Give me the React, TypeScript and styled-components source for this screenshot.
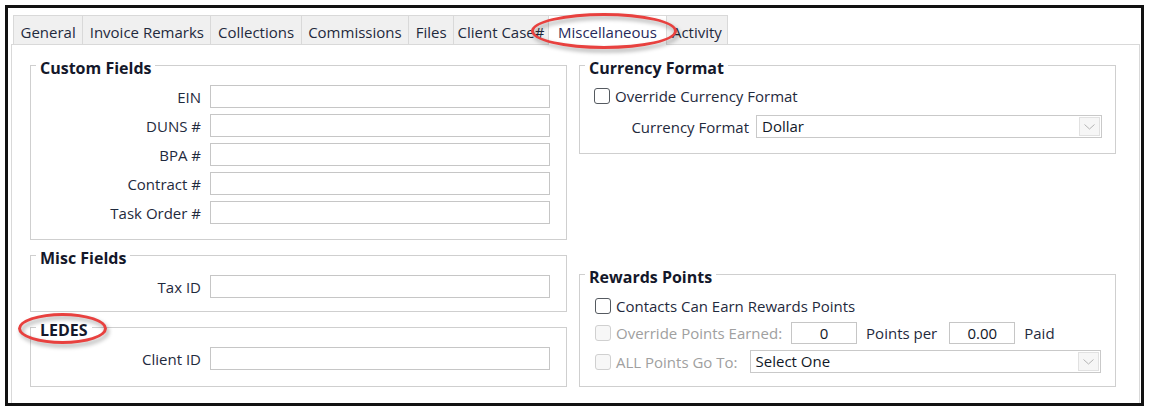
import React from "react";
import styled, { createGlobalStyle, css } from "styled-components";

const GlobalStyle = createGlobalStyle`
  html, body { margin: 0; padding: 0; background: #ffffff; }
  body {
    font-family: "Open Sans", "Noto Sans", sans-serif;
    font-size: 15px;
    color: #1f2a3d;
  }
  *, *::before, *::after { box-sizing: border-box; }
`;

const Frame = styled.div`
  margin: 5px 0 0 5px;
  width: 1139px;
  height: 401px;
  border: 3px solid #111111;
  padding: 7px 1px 0 3px;
  display: flex;
  flex-direction: column;
`;

const TabStrip = styled.div`
  display: flex;
  align-items: flex-end;
  margin-left: 2px;
  position: relative;
  z-index: 1;
`;

const Tab = styled.div<{ $active?: boolean; $pad?: number }>`
  position: relative;
  height: 29px;
  padding: 6px ${(p) => p.$pad ?? 6.5}px 0;
  line-height: 20px;
  border: 1px solid #d9d9d9;
  border-bottom: none;
  background: #f0f0f0;
  white-space: nowrap;
  color: #1f2a3d;
  & + & { margin-left: -1px; }
  ${(p) =>
    p.$active &&
    css`
      z-index: 2;
      height: 30px;
      margin-bottom: -1px;
      background: #ffffff;
      color: #27295a;
    `}
`;

const Callout = styled.span<{ $x: number; $y: number; $w: number; $h: number }>`
  position: absolute;
  left: ${(p) => p.$x}px;
  top: ${(p) => p.$y}px;
  width: ${(p) => p.$w}px;
  height: ${(p) => p.$h}px;
  border: 3px solid #e8413f;
  border-radius: 50%;
  filter: drop-shadow(2px 3px 2px rgba(0, 0, 0, 0.35));
  pointer-events: none;
  z-index: 5;
`;

const Panel = styled.div`
  flex: 1;
  border: 1px solid #d9d9d9;
  border-bottom: none;
  padding: 10px 0 0 18px;
  display: grid;
  grid-template-columns: 537px 537px;
  column-gap: 12px;
  align-content: start;
`;

const Column = styled.div<{ $spread?: boolean }>`
  display: flex;
  flex-direction: column;
  gap: 5px;
  justify-content: ${(p) => (p.$spread ? "space-between" : "flex-start")};
`;

const Group = styled.fieldset`
  margin: 0;
  padding: 0;
  min-width: 0;
  border: 1px solid #cfcfcf;
`;

const Legend = styled.legend`
  position: relative;
  margin-left: 5px;
  padding: 6px 4px 0;
  line-height: 14px;
  font-size: 16px;
  font-weight: 700;
  color: #14182a;
`;

const GroupBody = styled.div<{
  $gap: number;
  $top: number;
  $bottom: number;
  $side: number;
}>`
  display: flex;
  flex-direction: column;
  gap: ${(p) => p.$gap}px;
  padding: ${(p) => `${p.$top}px ${p.$side - 1}px ${p.$bottom}px ${p.$side}px`};
`;

const FieldRow = styled.div<{ $gap?: number }>`
  display: grid;
  grid-template-columns: 155px 1fr;
  column-gap: ${(p) => p.$gap ?? 9}px;
  align-items: center;
`;

const FieldLabel = styled.label`
  text-align: right;
  line-height: 20px;
  white-space: nowrap;
`;

const TextBox = styled.input<{ $width?: number; $height?: number; $center?: boolean }>`
  width: ${(p) => (p.$width ? `${p.$width}px` : "100%")};
  height: ${(p) => p.$height ?? 23}px;
  margin: 0;
  padding: 0 5px;
  border: 1px solid #c6c6c6;
  background: #ffffff;
  font: inherit;
  color: #111827;
  text-align: ${(p) => (p.$center ? "center" : "left")};
  outline: none;
`;

const Combo = styled.div`
  flex: 1;
  display: flex;
  align-items: stretch;
  height: 23px;
  border: 1px solid #c9c9c9;
  background: #ffffff;
`;

const ComboText = styled.span`
  flex: 1;
  padding: 0 5px;
  line-height: 21px;
  color: #111827;
`;

const ComboButton = styled.span`
  width: 21px;
  margin: 1px;
  display: flex;
  align-items: center;
  justify-content: center;
  border: 1px solid #e1e1e1;
  background: #f6f6f6;
`;

const CheckRow = styled.div<{ $gap?: number }>`
  display: flex;
  align-items: center;
  gap: ${(p) => p.$gap ?? 9}px;
  min-height: 20px;
`;

const CheckLabel = styled.label<{ $disabled?: boolean }>`
  display: flex;
  align-items: center;
  gap: 5px;
  line-height: 20px;
  white-space: nowrap;
  color: ${(p) => (p.$disabled ? "#a0a0a0" : "#1f2a3d")};
`;

const CheckBox = styled.input.attrs({ type: "checkbox" })`
  appearance: none;
  -webkit-appearance: none;
  margin: 0;
  width: 16px;
  height: 16px;
  border: 1.5px solid #555a60;
  border-radius: 3px;
  background: #ffffff;
  &:disabled {
    border-color: #d0d0d0;
    background: #f7f7f7;
  }
`;

const PlainText = styled.span<{ $pad?: number }>`
  line-height: 20px;
  white-space: nowrap;
  padding-right: ${(p) => p.$pad ?? 0}px;
`;

const Chevron = () => (
  <svg width="11" height="6" viewBox="0 0 11 6" fill="none">
    <path d="M0.5 0.5 L5.5 5 L10.5 0.5" stroke="#b5b5b5" strokeWidth="1" />
  </svg>
);

const Select = ({ value }: { value: string }) => (
  <Combo>
    <ComboText>{value}</ComboText>
    <ComboButton>
      <Chevron />
    </ComboButton>
  </Combo>
);

const tabs: { label: string; pad?: number }[] = [
  { label: "General" },
  { label: "Invoice Remarks" },
  { label: "Collections" },
  { label: "Commissions" },
  { label: "Files" },
  { label: "Client Case#", pad: 3.5 },
  { label: "Miscellaneous", pad: 9 },
  { label: "Activity", pad: 5 },
];

const customFields = ["EIN", "DUNS #", "BPA #", "Contract #", "Task Order #"];

export default function App() {
  return (
    <>
      <GlobalStyle />
      <Frame>
        <TabStrip>
          {tabs.map((t) => (
            <Tab key={t.label} $pad={t.pad} $active={t.label === "Miscellaneous"}>
              {t.label}
              {t.label === "Miscellaneous" && (
                <Callout $x={-18} $y={-3} $w={146} $h={36} />
              )}
            </Tab>
          ))}
        </TabStrip>
        <Panel>
          <Column>
            <Group>
              <Legend>Custom Fields</Legend>
              <GroupBody $gap={6} $top={10} $bottom={15} $side={15}>
                {customFields.map((f) => (
                  <FieldRow key={f}>
                    <FieldLabel>{f}</FieldLabel>
                    <TextBox $width={340} />
                  </FieldRow>
                ))}
              </GroupBody>
            </Group>
            <Group>
              <Legend>Misc Fields</Legend>
              <GroupBody $gap={6} $top={10} $bottom={13} $side={15}>
                <FieldRow>
                  <FieldLabel>Tax ID</FieldLabel>
                  <TextBox $width={340} />
                </FieldRow>
              </GroupBody>
            </Group>
            <Group>
              <Legend>
                LEDES
                <Callout $x={-18} $y={-4} $w={89} $h={31} />
              </Legend>
              <GroupBody $gap={6} $top={10} $bottom={16} $side={15}>
                <FieldRow>
                  <FieldLabel>Client ID</FieldLabel>
                  <TextBox $width={340} />
                </FieldRow>
              </GroupBody>
            </Group>
          </Column>

          <Column $spread>
            <Group>
              <Legend>Currency Format</Legend>
              <GroupBody $gap={9} $top={11} $bottom={15} $side={14}>
                <CheckRow>
                  <CheckLabel>
                    <CheckBox />
                    Override Currency Format
                  </CheckLabel>
                </CheckRow>
                <FieldRow $gap={7}>
                  <FieldLabel>Currency Format</FieldLabel>
                  <Select value="Dollar" />
                </FieldRow>
              </GroupBody>
            </Group>
            <Group>
              <Legend>Rewards Points</Legend>
              <GroupBody $gap={6} $top={12} $bottom={13} $side={15}>
                <CheckRow>
                  <CheckLabel>
                    <CheckBox />
                    Contacts Can Earn Rewards Points
                  </CheckLabel>
                </CheckRow>
                <CheckRow $gap={9}>
                  <CheckLabel $disabled>
                    <CheckBox disabled />
                    Override Points Earned:
                  </CheckLabel>
                  <TextBox $width={66} $height={22} $center defaultValue="0" />
                  <PlainText $pad={3}>Points per</PlainText>
                  <TextBox $width={66} $height={22} $center defaultValue="0.00" />
                  <PlainText>Paid</PlainText>
                </CheckRow>
                <CheckRow $gap={12}>
                  <CheckLabel $disabled>
                    <CheckBox disabled />
                    ALL Points Go To:
                  </CheckLabel>
                  <Select value="Select One" />
                </CheckRow>
              </GroupBody>
            </Group>
          </Column>
        </Panel>
      </Frame>
    </>
  );
}
